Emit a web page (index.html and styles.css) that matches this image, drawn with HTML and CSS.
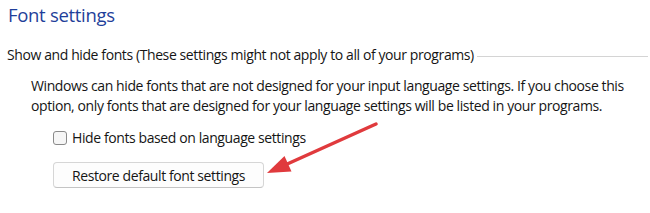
FILE: index.html
```html
<!DOCTYPE html>
<html lang="en">
<head>
    <meta charset="UTF-8">
    <title>Font settings</title>
    <link rel="stylesheet" href="styles.css">
</head>
<body>
    <div class="panel">
        <h1 class="title">Font settings</h1>

        <div class="group-header">
            <span class="group-label">Show and hide fonts (These settings might not apply to all of your programs)</span>
            <span class="group-line"></span>
        </div>

        <p class="description">Windows can hide fonts that are not designed for your input language settings. If you choose this option, only fonts that are designed for your language settings will be listed in your programs.</p>

        <label class="check-row">
            <input type="checkbox" class="check-box">
            <span>Hide fonts based on language settings</span>
        </label>

        <button class="restore-btn">Restore default font settings</button>
    </div>

    <!-- annotation arrow -->
    <svg class="arrow" width="650" height="213" viewBox="0 0 650 213">
        <line x1="376" y1="124" x2="285" y2="165" stroke="#e03a3d" stroke-width="3.5" stroke-linecap="round"/>
        <polygon points="267,173 291.5,171.5 284.5,156" fill="#e03a3d"/>
    </svg>
</body>
</html>
```

FILE: styles.css
```css
body {
    margin: 0;
    background-color: #fff;
    font-family: "Open Sans", "Noto Sans", sans-serif;
    font-size: 14px;
    letter-spacing: -0.4px;
    color: #151515;
    width: 650px;
    height: 213px;
    overflow: hidden;
    position: relative;
}

.panel {
    padding: 0 2px 0 7px;
}

.title {
    margin: 0;
    padding-top: 1px;
    padding-left: 1px;
    font-size: 18.5px;
    font-weight: normal;
    letter-spacing: -0.3px;
    color: #1f3f9a;
    line-height: 28px;
}

.group-header {
    display: flex;
    align-items: center;
    margin-top: 16px;
    line-height: 20px;
}

.group-line {
    flex-grow: 1;
    height: 1px;
    background-color: #d4d4d4;
    margin-left: 3px;
    margin-top: 2px;
}

.description {
    margin: 11px 0 0 24px;
    max-width: 596px;
    line-height: 20px;
}

.check-row {
    display: flex;
    align-items: center;
    margin: 12px 0 0 46px;
    line-height: 20px;
}

.check-box {
    appearance: none;
    width: 14px;
    height: 14px;
    margin: 0 5px 0 0;
    border: 1px solid #8a8a8a;
    border-radius: 3px;
    background-color: #f6f6f6;
}

.restore-btn {
    display: block;
    margin: 14px 0 0 46px;
    width: 211px;
    height: 26px;
    font-family: inherit;
    font-size: 14px;
    letter-spacing: -0.4px;
    color: #151515;
    background-color: #fdfdfd;
    border: 1px solid #d6d6d6;
    border-bottom-color: #c4c4c4;
    border-radius: 4px;
    padding: 0;
}

.arrow {
    position: absolute;
    left: 0;
    top: 0;
    pointer-events: none;
}
```
